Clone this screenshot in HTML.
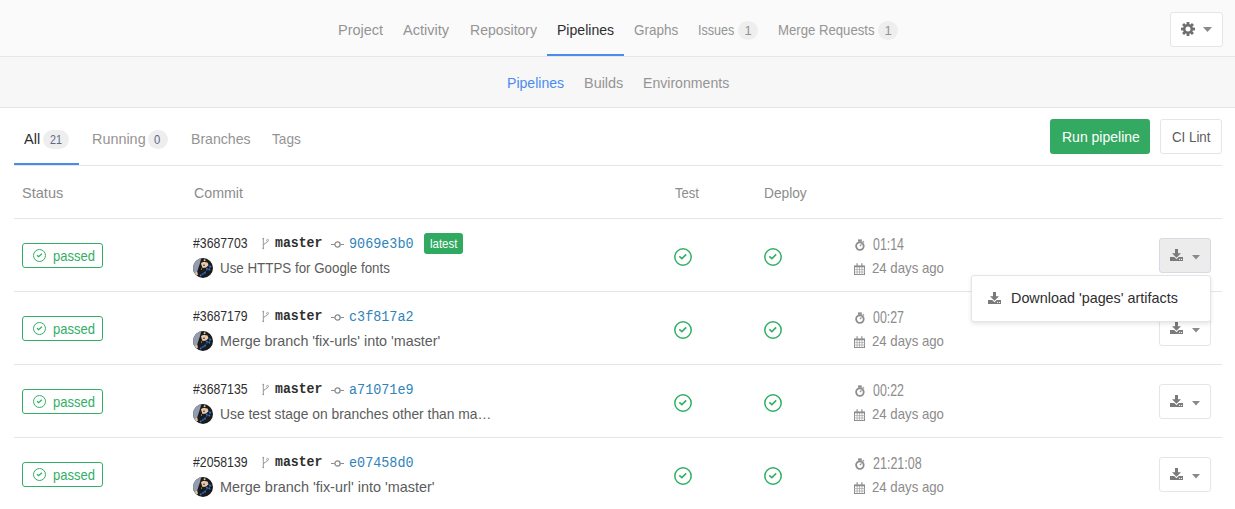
<!DOCTYPE html>
<html><head><meta charset="utf-8">
<style>
*{box-sizing:border-box;margin:0;padding:0}
html,body{width:1235px;height:509px;overflow:hidden;background:#fff}
body{position:relative;font-family:"Liberation Sans",sans-serif;color:#5c5c5c}
.a{position:absolute}
.t{position:absolute;white-space:nowrap;line-height:1;transform-origin:0 0}
.badge{position:absolute;background:#eee;border-radius:10px}
.hl{position:absolute;height:1px;background:#e5e5e5;left:14px;width:1208px}
.btn{position:absolute;border:1px solid #e5e5e5;border-radius:3px;background:#fff}
.ok{position:absolute;left:22px;width:81px;height:25px;border:1px solid #31af64;border-radius:3px}
.mono{font-family:"Liberation Mono",monospace}
</style></head><body>
<div class="a" style="left:0px;top:0px;width:1235px;height:57px;background:#fafafa;border-bottom:1px solid #e7e7e7"></div>
<div class="t" style="left:338px;top:22px;font-size:15px;color:#959494;transform:scaleX(0.967);">Project</div>
<div class="t" style="left:403px;top:22px;font-size:15px;color:#959494;transform:scaleX(0.971);">Activity</div>
<div class="t" style="left:469.5px;top:22px;font-size:15px;color:#959494;transform:scaleX(0.935);">Repository</div>
<div class="t" style="left:556.5px;top:22px;font-size:15px;color:#2e2e2e;transform:scaleX(0.937);">Pipelines</div>
<div class="t" style="left:634px;top:22px;font-size:15px;color:#959494;transform:scaleX(0.898);">Graphs</div>
<div class="t" style="left:698px;top:22px;font-size:15px;color:#959494;transform:scaleX(0.84);">Issues</div>
<div class="badge" style="left:738px;top:21px;width:20px;height:19px"></div>
<div class="t" style="left:744.5px;top:24px;font-size:13px;color:#959494;">1</div>
<div class="t" style="left:778px;top:22px;font-size:15px;color:#959494;transform:scaleX(0.877);">Merge Requests</div>
<div class="badge" style="left:878px;top:21px;width:20px;height:19px"></div>
<div class="t" style="left:884.5px;top:24px;font-size:13px;color:#959494;">1</div>
<div class="a" style="left:547px;top:54px;width:77px;height:2px;background:#4a8bee"></div>
<div class="btn" style="left:1170px;top:12px;width:53px;height:35px"></div>
<svg class="a" style="left:1181px;top:22px" width="14" height="14" viewBox="0 0 14 14"><g fill="#6e6e6e"><circle cx="7" cy="7" r="5"/><rect x="5.6" y="0" width="2.8" height="14"/><rect x="5.6" y="0" width="2.8" height="14" transform="rotate(45 7 7)"/><rect x="5.6" y="0" width="2.8" height="14" transform="rotate(90 7 7)"/><rect x="5.6" y="0" width="2.8" height="14" transform="rotate(135 7 7)"/></g><circle cx="7" cy="7" r="2.5" fill="#fff"/></svg>
<svg class="a" style="left:1203px;top:27px" width="9" height="5" viewBox="0 0 9 5"><path d="M0 0h9L4.5 5z" fill="#8a8a8a"/></svg>
<div class="a" style="left:0px;top:57px;width:1235px;height:51px;background:#f7f7f7;border-bottom:1px solid #e3e3e3"></div>
<div class="t" style="left:507px;top:75px;font-size:15px;color:#4a8bee;transform:scaleX(0.938);">Pipelines</div>
<div class="t" style="left:584px;top:75px;font-size:15px;color:#959494;transform:scaleX(0.9625);">Builds</div>
<div class="t" style="left:643px;top:75px;font-size:15px;color:#959494;transform:scaleX(0.94);">Environments</div>
<div class="t" style="left:24px;top:131px;font-size:15px;color:#2e2e2e;transform:scaleX(0.97);">All</div>
<div class="badge" style="left:43px;top:130px;width:26px;height:19px"></div>
<div class="t" style="left:50px;top:134px;font-size:12.5px;color:#5b6886;transform:scaleX(0.857);">21</div>
<div class="t" style="left:92px;top:131px;font-size:15px;color:#959494;transform:scaleX(0.96);">Running</div>
<div class="badge" style="left:148px;top:130px;width:20px;height:19px"></div>
<div class="t" style="left:154px;top:134px;font-size:12.5px;color:#5b6886;transform:scaleX(0.9);">0</div>
<div class="t" style="left:191px;top:131px;font-size:15px;color:#959494;transform:scaleX(0.94);">Branches</div>
<div class="t" style="left:272px;top:131px;font-size:15px;color:#959494;transform:scaleX(0.91);">Tags</div>
<div class="a" style="left:14px;top:163px;width:65px;height:2px;background:#4a8bee"></div>
<div class="hl" style="top:165px"></div>
<div class="a" style="left:1050px;top:119px;width:100px;height:35px;background:#33a961;border-radius:3px"></div>
<div class="t" style="left:1062px;top:130px;font-size:14px;color:#fff;">Run pipeline</div>
<div class="btn" style="left:1160px;top:119px;width:62px;height:35px"></div>
<div class="t" style="left:1171.5px;top:130px;font-size:14px;color:#5c5c5c;transform:scaleX(0.95);">CI Lint</div>
<div class="t" style="left:21.5px;top:185px;font-size:15px;color:#8c8c8c;transform:scaleX(0.97);">Status</div>
<div class="t" style="left:193.5px;top:185px;font-size:15px;color:#8c8c8c;transform:scaleX(0.948);">Commit</div>
<div class="t" style="left:674.5px;top:185px;font-size:15px;color:#8c8c8c;transform:scaleX(0.87);">Test</div>
<div class="t" style="left:763.5px;top:185px;font-size:15px;color:#8c8c8c;transform:scaleX(0.915);">Deploy</div>
<div class="hl" style="top:218px"></div>
<div class="ok" style="top:243px"></div>
<svg class="a" style="left:33px;top:249px" width="13" height="13" viewBox="0 0 13 13"><circle cx="6.5" cy="6.5" r="6" fill="none" stroke="#31af64" stroke-width="1"/><path d="M4 6.3l1.6 1.5 3.3-3.1" fill="none" stroke="#31af64" stroke-width="1.2"/></svg>
<div class="t" style="left:53px;top:248px;font-size:15px;color:#31af64;transform:scaleX(0.867);">passed</div>
<div class="t" style="left:193px;top:236px;font-size:14px;color:#2e2e2e;transform:scaleX(0.875);">#3687703</div>
<svg class="a" style="left:261px;top:237px" width="9" height="13" viewBox="0 0 9 13"><path d="M2.3 1.6v9.8M2.3 8.2c0-2.2 4.3-1.6 4.3-4.2" fill="none" stroke="#999" stroke-width="1"/><circle cx="2.3" cy="1.6" r=".9" fill="#999"/><circle cx="2.3" cy="11.3" r=".9" fill="#999"/><circle cx="6.6" cy="3.3" r="1" fill="none" stroke="#999" stroke-width="0.8"/></svg>
<div class="t" style="left:275px;top:236px;font-size:14px;color:#2e2e2e;transform:scaleX(0.94);font-family:Liberation Mono;font-weight:bold">master</div>
<svg class="a" style="left:331px;top:239.5px" width="13" height="9" viewBox="0 0 13 9"><path d="M0 4.5h3.6M9.4 4.5H13" stroke="#8c8c8c" stroke-width="1.2"/><circle cx="6.5" cy="4.5" r="2.6" fill="none" stroke="#8c8c8c" stroke-width="1.3"/></svg>
<div class="t" style="left:348.5px;top:237px;font-size:14px;color:#3084bb;transform:scaleX(0.96);font-family:Liberation Mono">9069e3b0</div>
<div class="a" style="left:424px;top:233px;width:39px;height:21px;background:#2faa60;border-radius:3px"></div>
<div class="t" style="left:430px;top:236.5px;font-size:13.5px;color:#fff;transform:scaleX(0.85);">latest</div>
<svg class="a" style="left:193px;top:258px" width="20" height="20" viewBox="0 0 20 20"><defs><clipPath id="c0"><circle cx="10" cy="10" r="10"/></clipPath></defs><g clip-path="url(#c0)"><rect width="20" height="20" fill="#1c1c1c"/><path d="M0 0h8.3L7 5 4 14 3 20H0z" fill="#939dad"/><path d="M2.3 14.5l2-1 .6 3.5-2.3.5z" fill="#e8c4a4"/><path d="M8 5.5C9 3.8 12 3.6 14.5 4.6l1 2.6-2.4 2.4-3.6.5z" fill="#eccaa8"/><circle cx="11.6" cy="2.2" r="1" fill="#e8c4a4"/><circle cx="11" cy="7.3" r=".8" fill="#222"/><path d="M7 18L18.5 8.5" stroke="#2f7be8" stroke-width=".7" opacity=".7"/><circle cx="13.9" cy="10.7" r=".9" fill="#2f7be8"/><circle cx="16.4" cy="11.6" r=".9" fill="#2f7be8"/><circle cx="17" cy="8.5" r=".9" fill="#2f7be8"/><circle cx="12" cy="14.8" r=".9" fill="#2f7be8"/><circle cx="7.6" cy="17.3" r=".9" fill="#2f7be8"/><circle cx="10" cy="16" r=".8" fill="#2f7be8"/><circle cx="8.5" cy="11" r=".6" fill="#ddd"/></g></svg>
<div class="t" style="left:220px;top:260px;font-size:15px;color:#5c5c5c;transform:scaleX(0.89);">Use HTTPS for Google fonts</div>
<svg class="a" style="left:674px;top:248px" width="18" height="18" viewBox="0 0 18 18"><circle cx="9" cy="9" r="8.2" fill="none" stroke="#31af64" stroke-width="1.5"/><path d="M5.3 8.3l2.6 2.3 4.3-4.2" fill="none" stroke="#31af64" stroke-width="1.6"/></svg>
<svg class="a" style="left:764px;top:248px" width="18" height="18" viewBox="0 0 18 18"><circle cx="9" cy="9" r="8.2" fill="none" stroke="#31af64" stroke-width="1.5"/><path d="M5.3 8.3l2.6 2.3 4.3-4.2" fill="none" stroke="#31af64" stroke-width="1.6"/></svg>
<svg class="a" style="left:855px;top:239px" width="11" height="12" viewBox="0 0 11 12"><circle cx="4.9" cy="7.1" r="3.8" fill="none" stroke="#8c8c8c" stroke-width="1.8"/><path d="M3 0.4h3.8v2.3H3z" fill="#8c8c8c"/><path d="M4.9 7.1l1.6-1.8" stroke="#8c8c8c" stroke-width="1.1"/><path d="M7.8 2.2l1.2 1.2" stroke="#8c8c8c" stroke-width="1.2"/></svg>
<div class="t" style="left:873px;top:236.5px;font-size:15.75px;color:#8c8c8c;transform:scaleX(0.785);">01:14</div>
<svg class="a" style="left:854px;top:263px" width="11" height="12" viewBox="0 0 11 12"><path d="M0.5 4v7.5M10.5 4v7.5M0 11.5h11" stroke="#8c8c8c" stroke-width="1"/><path d="M3.1 4v7.5M5.5 4v7.5M8 4v7.5M0 6.6h11M0 9h11" stroke="#a8a8a8" stroke-width="0.8"/><path d="M0 2.4h11v1.9H0z" fill="#8c8c8c"/><path d="M3.1 0.3v2.4M7.9 0.3v2.4" stroke="#8c8c8c" stroke-width="1.2"/></svg>
<div class="t" style="left:872px;top:260px;font-size:15px;color:#8c8c8c;transform:scaleX(0.88);">24 days ago</div>
<div class="btn" style="left:1159px;top:238px;width:52px;height:35px;background:#ececec;border-color:#d6dbe3"></div>
<svg class="a" style="left:1170px;top:249px" width="13" height="12" viewBox="0 0 13 12"><path d="M5 0h3v4.2h3L6.5 8.7 2 4.2h3z" fill="#7a7a7a"/><path d="M0 8h4.3l2.2 2.2L8.7 8H13v4H0z" fill="#7a7a7a"/><circle cx="9.6" cy="10.3" r=".65" fill="#fff"/><circle cx="11.5" cy="10.3" r=".65" fill="#fff"/></svg>
<svg class="a" style="left:1192px;top:255px" width="8" height="5" viewBox="0 0 8 5"><path d="M0 0h8L4 4.5z" fill="#8a8a8a"/></svg>
<div class="hl" style="top:291px"></div>
<div class="ok" style="top:316px"></div>
<svg class="a" style="left:33px;top:322px" width="13" height="13" viewBox="0 0 13 13"><circle cx="6.5" cy="6.5" r="6" fill="none" stroke="#31af64" stroke-width="1"/><path d="M4 6.3l1.6 1.5 3.3-3.1" fill="none" stroke="#31af64" stroke-width="1.2"/></svg>
<div class="t" style="left:53px;top:321px;font-size:15px;color:#31af64;transform:scaleX(0.867);">passed</div>
<div class="t" style="left:193px;top:309px;font-size:14px;color:#2e2e2e;transform:scaleX(0.875);">#3687179</div>
<svg class="a" style="left:261px;top:310px" width="9" height="13" viewBox="0 0 9 13"><path d="M2.3 1.6v9.8M2.3 8.2c0-2.2 4.3-1.6 4.3-4.2" fill="none" stroke="#999" stroke-width="1"/><circle cx="2.3" cy="1.6" r=".9" fill="#999"/><circle cx="2.3" cy="11.3" r=".9" fill="#999"/><circle cx="6.6" cy="3.3" r="1" fill="none" stroke="#999" stroke-width="0.8"/></svg>
<div class="t" style="left:275px;top:309px;font-size:14px;color:#2e2e2e;transform:scaleX(0.94);font-family:Liberation Mono;font-weight:bold">master</div>
<svg class="a" style="left:331px;top:312.5px" width="13" height="9" viewBox="0 0 13 9"><path d="M0 4.5h3.6M9.4 4.5H13" stroke="#8c8c8c" stroke-width="1.2"/><circle cx="6.5" cy="4.5" r="2.6" fill="none" stroke="#8c8c8c" stroke-width="1.3"/></svg>
<div class="t" style="left:348.5px;top:310px;font-size:14px;color:#3084bb;transform:scaleX(0.96);font-family:Liberation Mono">c3f817a2</div>
<svg class="a" style="left:193px;top:331px" width="20" height="20" viewBox="0 0 20 20"><defs><clipPath id="c1"><circle cx="10" cy="10" r="10"/></clipPath></defs><g clip-path="url(#c1)"><rect width="20" height="20" fill="#1c1c1c"/><path d="M0 0h8.3L7 5 4 14 3 20H0z" fill="#939dad"/><path d="M2.3 14.5l2-1 .6 3.5-2.3.5z" fill="#e8c4a4"/><path d="M8 5.5C9 3.8 12 3.6 14.5 4.6l1 2.6-2.4 2.4-3.6.5z" fill="#eccaa8"/><circle cx="11.6" cy="2.2" r="1" fill="#e8c4a4"/><circle cx="11" cy="7.3" r=".8" fill="#222"/><path d="M7 18L18.5 8.5" stroke="#2f7be8" stroke-width=".7" opacity=".7"/><circle cx="13.9" cy="10.7" r=".9" fill="#2f7be8"/><circle cx="16.4" cy="11.6" r=".9" fill="#2f7be8"/><circle cx="17" cy="8.5" r=".9" fill="#2f7be8"/><circle cx="12" cy="14.8" r=".9" fill="#2f7be8"/><circle cx="7.6" cy="17.3" r=".9" fill="#2f7be8"/><circle cx="10" cy="16" r=".8" fill="#2f7be8"/><circle cx="8.5" cy="11" r=".6" fill="#ddd"/></g></svg>
<div class="t" style="left:220px;top:333px;font-size:15px;color:#5c5c5c;transform:scaleX(0.955);">Merge branch 'fix-urls' into 'master'</div>
<svg class="a" style="left:674px;top:321px" width="18" height="18" viewBox="0 0 18 18"><circle cx="9" cy="9" r="8.2" fill="none" stroke="#31af64" stroke-width="1.5"/><path d="M5.3 8.3l2.6 2.3 4.3-4.2" fill="none" stroke="#31af64" stroke-width="1.6"/></svg>
<svg class="a" style="left:764px;top:321px" width="18" height="18" viewBox="0 0 18 18"><circle cx="9" cy="9" r="8.2" fill="none" stroke="#31af64" stroke-width="1.5"/><path d="M5.3 8.3l2.6 2.3 4.3-4.2" fill="none" stroke="#31af64" stroke-width="1.6"/></svg>
<svg class="a" style="left:855px;top:312px" width="11" height="12" viewBox="0 0 11 12"><circle cx="4.9" cy="7.1" r="3.8" fill="none" stroke="#8c8c8c" stroke-width="1.8"/><path d="M3 0.4h3.8v2.3H3z" fill="#8c8c8c"/><path d="M4.9 7.1l1.6-1.8" stroke="#8c8c8c" stroke-width="1.1"/><path d="M7.8 2.2l1.2 1.2" stroke="#8c8c8c" stroke-width="1.2"/></svg>
<div class="t" style="left:873px;top:309.5px;font-size:15.75px;color:#8c8c8c;transform:scaleX(0.785);">00:27</div>
<svg class="a" style="left:854px;top:336px" width="11" height="12" viewBox="0 0 11 12"><path d="M0.5 4v7.5M10.5 4v7.5M0 11.5h11" stroke="#8c8c8c" stroke-width="1"/><path d="M3.1 4v7.5M5.5 4v7.5M8 4v7.5M0 6.6h11M0 9h11" stroke="#a8a8a8" stroke-width="0.8"/><path d="M0 2.4h11v1.9H0z" fill="#8c8c8c"/><path d="M3.1 0.3v2.4M7.9 0.3v2.4" stroke="#8c8c8c" stroke-width="1.2"/></svg>
<div class="t" style="left:872px;top:333px;font-size:15px;color:#8c8c8c;transform:scaleX(0.88);">24 days ago</div>
<div class="btn" style="left:1159px;top:311px;width:52px;height:35px"></div>
<svg class="a" style="left:1170px;top:322px" width="13" height="12" viewBox="0 0 13 12"><path d="M5 0h3v4.2h3L6.5 8.7 2 4.2h3z" fill="#7a7a7a"/><path d="M0 8h4.3l2.2 2.2L8.7 8H13v4H0z" fill="#7a7a7a"/><circle cx="9.6" cy="10.3" r=".65" fill="#fff"/><circle cx="11.5" cy="10.3" r=".65" fill="#fff"/></svg>
<svg class="a" style="left:1192px;top:328px" width="8" height="5" viewBox="0 0 8 5"><path d="M0 0h8L4 4.5z" fill="#8a8a8a"/></svg>
<div class="hl" style="top:364px"></div>
<div class="ok" style="top:389px"></div>
<svg class="a" style="left:33px;top:395px" width="13" height="13" viewBox="0 0 13 13"><circle cx="6.5" cy="6.5" r="6" fill="none" stroke="#31af64" stroke-width="1"/><path d="M4 6.3l1.6 1.5 3.3-3.1" fill="none" stroke="#31af64" stroke-width="1.2"/></svg>
<div class="t" style="left:53px;top:394px;font-size:15px;color:#31af64;transform:scaleX(0.867);">passed</div>
<div class="t" style="left:193px;top:382px;font-size:14px;color:#2e2e2e;transform:scaleX(0.875);">#3687135</div>
<svg class="a" style="left:261px;top:383px" width="9" height="13" viewBox="0 0 9 13"><path d="M2.3 1.6v9.8M2.3 8.2c0-2.2 4.3-1.6 4.3-4.2" fill="none" stroke="#999" stroke-width="1"/><circle cx="2.3" cy="1.6" r=".9" fill="#999"/><circle cx="2.3" cy="11.3" r=".9" fill="#999"/><circle cx="6.6" cy="3.3" r="1" fill="none" stroke="#999" stroke-width="0.8"/></svg>
<div class="t" style="left:275px;top:382px;font-size:14px;color:#2e2e2e;transform:scaleX(0.94);font-family:Liberation Mono;font-weight:bold">master</div>
<svg class="a" style="left:331px;top:385.5px" width="13" height="9" viewBox="0 0 13 9"><path d="M0 4.5h3.6M9.4 4.5H13" stroke="#8c8c8c" stroke-width="1.2"/><circle cx="6.5" cy="4.5" r="2.6" fill="none" stroke="#8c8c8c" stroke-width="1.3"/></svg>
<div class="t" style="left:348.5px;top:383px;font-size:14px;color:#3084bb;transform:scaleX(0.96);font-family:Liberation Mono">a71071e9</div>
<svg class="a" style="left:193px;top:404px" width="20" height="20" viewBox="0 0 20 20"><defs><clipPath id="c2"><circle cx="10" cy="10" r="10"/></clipPath></defs><g clip-path="url(#c2)"><rect width="20" height="20" fill="#1c1c1c"/><path d="M0 0h8.3L7 5 4 14 3 20H0z" fill="#939dad"/><path d="M2.3 14.5l2-1 .6 3.5-2.3.5z" fill="#e8c4a4"/><path d="M8 5.5C9 3.8 12 3.6 14.5 4.6l1 2.6-2.4 2.4-3.6.5z" fill="#eccaa8"/><circle cx="11.6" cy="2.2" r="1" fill="#e8c4a4"/><circle cx="11" cy="7.3" r=".8" fill="#222"/><path d="M7 18L18.5 8.5" stroke="#2f7be8" stroke-width=".7" opacity=".7"/><circle cx="13.9" cy="10.7" r=".9" fill="#2f7be8"/><circle cx="16.4" cy="11.6" r=".9" fill="#2f7be8"/><circle cx="17" cy="8.5" r=".9" fill="#2f7be8"/><circle cx="12" cy="14.8" r=".9" fill="#2f7be8"/><circle cx="7.6" cy="17.3" r=".9" fill="#2f7be8"/><circle cx="10" cy="16" r=".8" fill="#2f7be8"/><circle cx="8.5" cy="11" r=".6" fill="#ddd"/></g></svg>
<div class="t" style="left:220px;top:406px;font-size:15px;color:#5c5c5c;transform:scaleX(0.922);">Use test stage on branches other than ma…</div>
<svg class="a" style="left:674px;top:394px" width="18" height="18" viewBox="0 0 18 18"><circle cx="9" cy="9" r="8.2" fill="none" stroke="#31af64" stroke-width="1.5"/><path d="M5.3 8.3l2.6 2.3 4.3-4.2" fill="none" stroke="#31af64" stroke-width="1.6"/></svg>
<svg class="a" style="left:764px;top:394px" width="18" height="18" viewBox="0 0 18 18"><circle cx="9" cy="9" r="8.2" fill="none" stroke="#31af64" stroke-width="1.5"/><path d="M5.3 8.3l2.6 2.3 4.3-4.2" fill="none" stroke="#31af64" stroke-width="1.6"/></svg>
<svg class="a" style="left:855px;top:385px" width="11" height="12" viewBox="0 0 11 12"><circle cx="4.9" cy="7.1" r="3.8" fill="none" stroke="#8c8c8c" stroke-width="1.8"/><path d="M3 0.4h3.8v2.3H3z" fill="#8c8c8c"/><path d="M4.9 7.1l1.6-1.8" stroke="#8c8c8c" stroke-width="1.1"/><path d="M7.8 2.2l1.2 1.2" stroke="#8c8c8c" stroke-width="1.2"/></svg>
<div class="t" style="left:873px;top:382.5px;font-size:15.75px;color:#8c8c8c;transform:scaleX(0.785);">00:22</div>
<svg class="a" style="left:854px;top:409px" width="11" height="12" viewBox="0 0 11 12"><path d="M0.5 4v7.5M10.5 4v7.5M0 11.5h11" stroke="#8c8c8c" stroke-width="1"/><path d="M3.1 4v7.5M5.5 4v7.5M8 4v7.5M0 6.6h11M0 9h11" stroke="#a8a8a8" stroke-width="0.8"/><path d="M0 2.4h11v1.9H0z" fill="#8c8c8c"/><path d="M3.1 0.3v2.4M7.9 0.3v2.4" stroke="#8c8c8c" stroke-width="1.2"/></svg>
<div class="t" style="left:872px;top:406px;font-size:15px;color:#8c8c8c;transform:scaleX(0.88);">24 days ago</div>
<div class="btn" style="left:1159px;top:384px;width:52px;height:35px"></div>
<svg class="a" style="left:1170px;top:395px" width="13" height="12" viewBox="0 0 13 12"><path d="M5 0h3v4.2h3L6.5 8.7 2 4.2h3z" fill="#7a7a7a"/><path d="M0 8h4.3l2.2 2.2L8.7 8H13v4H0z" fill="#7a7a7a"/><circle cx="9.6" cy="10.3" r=".65" fill="#fff"/><circle cx="11.5" cy="10.3" r=".65" fill="#fff"/></svg>
<svg class="a" style="left:1192px;top:401px" width="8" height="5" viewBox="0 0 8 5"><path d="M0 0h8L4 4.5z" fill="#8a8a8a"/></svg>
<div class="hl" style="top:437px"></div>
<div class="ok" style="top:462px"></div>
<svg class="a" style="left:33px;top:468px" width="13" height="13" viewBox="0 0 13 13"><circle cx="6.5" cy="6.5" r="6" fill="none" stroke="#31af64" stroke-width="1"/><path d="M4 6.3l1.6 1.5 3.3-3.1" fill="none" stroke="#31af64" stroke-width="1.2"/></svg>
<div class="t" style="left:53px;top:467px;font-size:15px;color:#31af64;transform:scaleX(0.867);">passed</div>
<div class="t" style="left:193px;top:455px;font-size:14px;color:#2e2e2e;transform:scaleX(0.875);">#2058139</div>
<svg class="a" style="left:261px;top:456px" width="9" height="13" viewBox="0 0 9 13"><path d="M2.3 1.6v9.8M2.3 8.2c0-2.2 4.3-1.6 4.3-4.2" fill="none" stroke="#999" stroke-width="1"/><circle cx="2.3" cy="1.6" r=".9" fill="#999"/><circle cx="2.3" cy="11.3" r=".9" fill="#999"/><circle cx="6.6" cy="3.3" r="1" fill="none" stroke="#999" stroke-width="0.8"/></svg>
<div class="t" style="left:275px;top:455px;font-size:14px;color:#2e2e2e;transform:scaleX(0.94);font-family:Liberation Mono;font-weight:bold">master</div>
<svg class="a" style="left:331px;top:458.5px" width="13" height="9" viewBox="0 0 13 9"><path d="M0 4.5h3.6M9.4 4.5H13" stroke="#8c8c8c" stroke-width="1.2"/><circle cx="6.5" cy="4.5" r="2.6" fill="none" stroke="#8c8c8c" stroke-width="1.3"/></svg>
<div class="t" style="left:348.5px;top:456px;font-size:14px;color:#3084bb;transform:scaleX(0.96);font-family:Liberation Mono">e07458d0</div>
<svg class="a" style="left:193px;top:477px" width="20" height="20" viewBox="0 0 20 20"><defs><clipPath id="c3"><circle cx="10" cy="10" r="10"/></clipPath></defs><g clip-path="url(#c3)"><rect width="20" height="20" fill="#1c1c1c"/><path d="M0 0h8.3L7 5 4 14 3 20H0z" fill="#939dad"/><path d="M2.3 14.5l2-1 .6 3.5-2.3.5z" fill="#e8c4a4"/><path d="M8 5.5C9 3.8 12 3.6 14.5 4.6l1 2.6-2.4 2.4-3.6.5z" fill="#eccaa8"/><circle cx="11.6" cy="2.2" r="1" fill="#e8c4a4"/><circle cx="11" cy="7.3" r=".8" fill="#222"/><path d="M7 18L18.5 8.5" stroke="#2f7be8" stroke-width=".7" opacity=".7"/><circle cx="13.9" cy="10.7" r=".9" fill="#2f7be8"/><circle cx="16.4" cy="11.6" r=".9" fill="#2f7be8"/><circle cx="17" cy="8.5" r=".9" fill="#2f7be8"/><circle cx="12" cy="14.8" r=".9" fill="#2f7be8"/><circle cx="7.6" cy="17.3" r=".9" fill="#2f7be8"/><circle cx="10" cy="16" r=".8" fill="#2f7be8"/><circle cx="8.5" cy="11" r=".6" fill="#ddd"/></g></svg>
<div class="t" style="left:220px;top:479px;font-size:15px;color:#5c5c5c;transform:scaleX(0.961);">Merge branch 'fix-url' into 'master'</div>
<svg class="a" style="left:674px;top:467px" width="18" height="18" viewBox="0 0 18 18"><circle cx="9" cy="9" r="8.2" fill="none" stroke="#31af64" stroke-width="1.5"/><path d="M5.3 8.3l2.6 2.3 4.3-4.2" fill="none" stroke="#31af64" stroke-width="1.6"/></svg>
<svg class="a" style="left:764px;top:467px" width="18" height="18" viewBox="0 0 18 18"><circle cx="9" cy="9" r="8.2" fill="none" stroke="#31af64" stroke-width="1.5"/><path d="M5.3 8.3l2.6 2.3 4.3-4.2" fill="none" stroke="#31af64" stroke-width="1.6"/></svg>
<svg class="a" style="left:855px;top:458px" width="11" height="12" viewBox="0 0 11 12"><circle cx="4.9" cy="7.1" r="3.8" fill="none" stroke="#8c8c8c" stroke-width="1.8"/><path d="M3 0.4h3.8v2.3H3z" fill="#8c8c8c"/><path d="M4.9 7.1l1.6-1.8" stroke="#8c8c8c" stroke-width="1.1"/><path d="M7.8 2.2l1.2 1.2" stroke="#8c8c8c" stroke-width="1.2"/></svg>
<div class="t" style="left:873px;top:455.5px;font-size:15.75px;color:#8c8c8c;transform:scaleX(0.795);">21:21:08</div>
<svg class="a" style="left:854px;top:482px" width="11" height="12" viewBox="0 0 11 12"><path d="M0.5 4v7.5M10.5 4v7.5M0 11.5h11" stroke="#8c8c8c" stroke-width="1"/><path d="M3.1 4v7.5M5.5 4v7.5M8 4v7.5M0 6.6h11M0 9h11" stroke="#a8a8a8" stroke-width="0.8"/><path d="M0 2.4h11v1.9H0z" fill="#8c8c8c"/><path d="M3.1 0.3v2.4M7.9 0.3v2.4" stroke="#8c8c8c" stroke-width="1.2"/></svg>
<div class="t" style="left:872px;top:479px;font-size:15px;color:#8c8c8c;transform:scaleX(0.88);">24 days ago</div>
<div class="btn" style="left:1159px;top:457px;width:52px;height:35px"></div>
<svg class="a" style="left:1170px;top:468px" width="13" height="12" viewBox="0 0 13 12"><path d="M5 0h3v4.2h3L6.5 8.7 2 4.2h3z" fill="#7a7a7a"/><path d="M0 8h4.3l2.2 2.2L8.7 8H13v4H0z" fill="#7a7a7a"/><circle cx="9.6" cy="10.3" r=".65" fill="#fff"/><circle cx="11.5" cy="10.3" r=".65" fill="#fff"/></svg>
<svg class="a" style="left:1192px;top:474px" width="8" height="5" viewBox="0 0 8 5"><path d="M0 0h8L4 4.5z" fill="#8a8a8a"/></svg>
<div class="a" style="left:971px;top:275px;width:240px;height:47px;background:#fff;border:1px solid #e5e5e5;border-radius:3px;box-shadow:0 2px 4px rgba(0,0,0,.1)"></div>
<svg class="a" style="left:988px;top:292px" width="13" height="12" viewBox="0 0 13 12"><path d="M5 0h3v4.2h3L6.5 8.7 2 4.2h3z" fill="#7a7a7a"/><path d="M0 8h4.3l2.2 2.2L8.7 8H13v4H0z" fill="#7a7a7a"/><circle cx="9.6" cy="10.3" r=".65" fill="#fff"/><circle cx="11.5" cy="10.3" r=".65" fill="#fff"/></svg>
<div class="t" style="left:1011px;top:290px;font-size:15px;color:#2e2e2e;transform:scaleX(0.958);">Download 'pages' artifacts</div>
</body></html>
